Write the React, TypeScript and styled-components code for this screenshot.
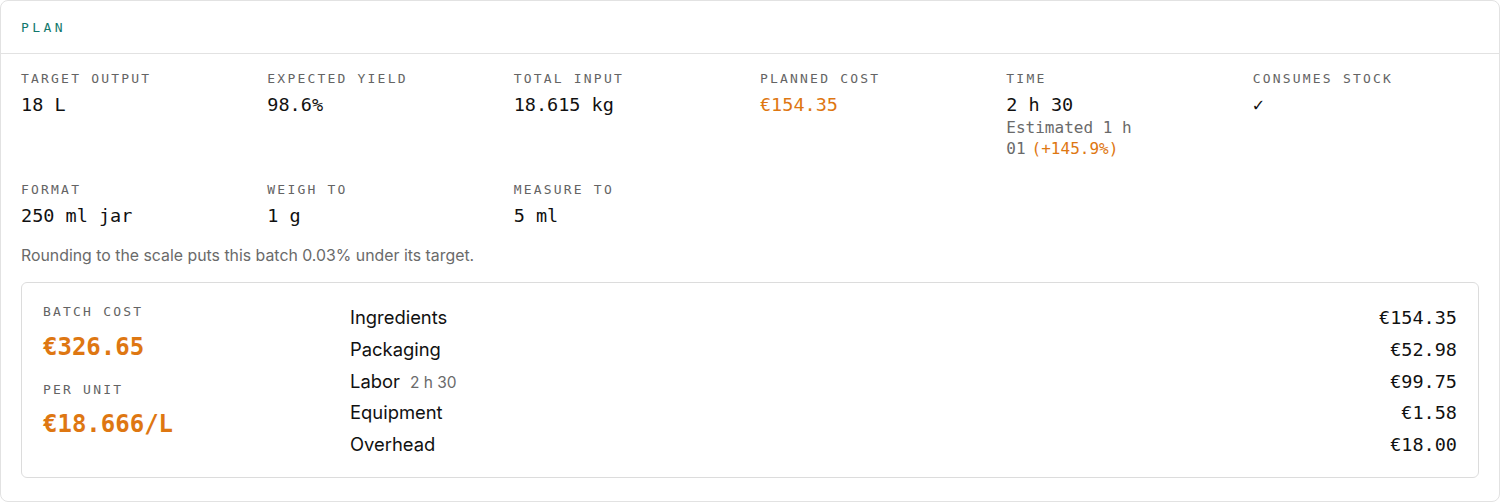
import React from 'react';
import styled, { createGlobalStyle } from 'styled-components';

const mono = `'DejaVu Sans Mono', 'Liberation Mono', monospace`;
const sans = `Inter, 'Noto Sans', Arial, sans-serif`;

const colors = {
  teal: '#12786d',
  orange: '#de7712',
  label: '#646464',
  text: '#111111',
  muted: '#6a6a6a',
  border: '#e2e2e2',
};

const GlobalStyle = createGlobalStyle`
  html, body {
    margin: 0;
    padding: 0;
    background: #ffffff;
  }
  body {
    font-family: ${sans};
    color: ${colors.text};
  }
`;

const Card = styled.section`
  box-sizing: border-box;
  width: 1500px;
  height: 502px;
  border: 1px solid ${colors.border};
  border-radius: 8px;
  background: #fff;
  overflow: hidden;
`;

const Header = styled.header`
  height: 52px;
  display: flex;
  align-items: center;
  padding: 0 20px;
  border-bottom: 1px solid ${colors.border};
  font-family: ${mono};
  font-size: 13px;
  letter-spacing: 3.4px;
  color: ${colors.teal};
`;

const Body = styled.div`
  padding: 17px 20px 20px;
`;

const StatsGrid = styled.div`
  display: grid;
  grid-template-columns: repeat(6, minmax(0, 1fr));
  column-gap: 20px;
  row-gap: 23px;
`;

const Stat = styled.div`
  display: flex;
  flex-direction: column;
`;

const Label = styled.div`
  font-family: ${mono};
  font-size: 13px;
  line-height: 16px;
  letter-spacing: 2.2px;
  text-transform: uppercase;
  color: ${colors.label};
`;

const Value = styled.div<{ $accent?: boolean }>`
  margin-top: 6px;
  font-family: ${mono};
  font-size: 18.5px;
  line-height: 24px;
  color: ${({ $accent }) => ($accent ? colors.orange : colors.text)};
`;

const Sub = styled.div`
  max-width: 145px;
  font-family: ${mono};
  font-size: 16px;
  line-height: 21px;
  color: ${colors.muted};
`;

const Delta = styled.span`
  display: inline-block;
  margin-left: 6px;
  color: ${colors.orange};
`;

const Note = styled.p`
  margin: 17px 0 15px;
  font-family: ${sans};
  font-size: 15.85px;
  line-height: 22px;
  color: ${colors.muted};
`;

const CostCard = styled.div`
  box-sizing: border-box;
  height: 196px;
  display: grid;
  grid-template-columns: 307px 1fr;
  padding: 18px 21px;
  border: 1px solid #dcdcdc;
  border-radius: 6px;
`;

const Totals = styled.div`
  padding-top: 3px;
  display: flex;
  flex-direction: column;
`;

const Big = styled.div<{ $gap: number }>`
  margin: ${({ $gap }) => $gap}px 0 0;
  font-family: ${mono};
  font-size: 24px;
  line-height: 32px;
  font-weight: 700;
  color: ${colors.orange};
`;

const SpacedLabel = styled(Label)<{ $gap?: number }>`
  margin-top: ${({ $gap }) => $gap || 0}px;
`;

const Breakdown = styled.div`
  display: flex;
  flex-direction: column;
`;

const Line = styled.div`
  display: flex;
  justify-content: space-between;
  align-items: baseline;
  height: 31.75px;
  line-height: 32px;
`;

const LineName = styled.span`
  font-family: ${sans};
  font-size: 18.4px;
  color: ${colors.text};

  small {
    margin-left: 10px;
    font-size: 15.5px;
    color: ${colors.muted};
  }
`;

const LineAmount = styled.span`
  font-family: ${mono};
  font-size: 18.5px;
  color: ${colors.text};
`;

const breakdown = [
  { name: 'Ingredients', amount: '€154.35' },
  { name: 'Packaging', amount: '€52.98' },
  { name: 'Labor', extra: '2 h 30', amount: '€99.75' },
  { name: 'Equipment', amount: '€1.58' },
  { name: 'Overhead', amount: '€18.00' },
];

export default function App() {
  return (
    <>
      <GlobalStyle />
      <Card>
        <Header>PLAN</Header>
        <Body>
          <StatsGrid>
            <Stat>
              <Label>Target output</Label>
              <Value>18 L</Value>
            </Stat>
            <Stat>
              <Label>Expected yield</Label>
              <Value>98.6%</Value>
            </Stat>
            <Stat>
              <Label>Total input</Label>
              <Value>18.615 kg</Value>
            </Stat>
            <Stat>
              <Label>Planned cost</Label>
              <Value $accent>€154.35</Value>
            </Stat>
            <Stat>
              <Label>Time</Label>
              <Value>2 h 30</Value>
              <Sub>
                Estimated 1 h 01<Delta>(+145.9%)</Delta>
              </Sub>
            </Stat>
            <Stat>
              <Label>Consumes stock</Label>
              <Value>✓</Value>
            </Stat>
            <Stat>
              <Label>Format</Label>
              <Value>250 ml jar</Value>
            </Stat>
            <Stat>
              <Label>Weigh to</Label>
              <Value>1 g</Value>
            </Stat>
            <Stat>
              <Label>Measure to</Label>
              <Value>5 ml</Value>
            </Stat>
          </StatsGrid>

          <Note>Rounding to the scale puts this batch 0.03% under its target.</Note>

          <CostCard>
            <Totals>
              <SpacedLabel>Batch cost</SpacedLabel>
              <Big $gap={11}>€326.65</Big>
              <SpacedLabel $gap={19}>Per unit</SpacedLabel>
              <Big $gap={10}>€18.666/L</Big>
            </Totals>
            <Breakdown>
              {breakdown.map((row) => (
                <Line key={row.name}>
                  <LineName>
                    {row.name}
                    {row.extra && <small>{row.extra}</small>}
                  </LineName>
                  <LineAmount>{row.amount}</LineAmount>
                </Line>
              ))}
            </Breakdown>
          </CostCard>
        </Body>
      </Card>
    </>
  );
}
